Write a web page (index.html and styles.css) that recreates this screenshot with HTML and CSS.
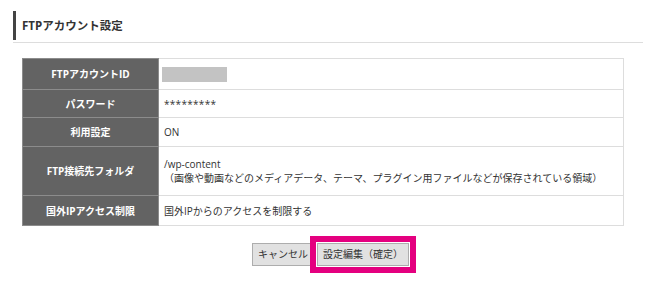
FILE: index.html
```html
<!DOCTYPE html>
<html lang="ja">
<head>
    <meta charset="UTF-8">
    <title>FTPアカウント設定</title>
    <link rel="stylesheet" href="styles.css">
</head>
<body>
    <div class="section-title">
        <h2>FTPアカウント設定</h2>
    </div>

    <table class="settings">
        <tbody>
            <tr class="row-id">
                <th>FTPアカウントID</th>
                <td><span class="masked"></span></td>
            </tr>
            <tr class="row-pass">
                <th>パスワード</th>
                <td class="stars">*********</td>
            </tr>
            <tr class="row-use">
                <th>利用設定</th>
                <td>ON</td>
            </tr>
            <tr class="row-folder">
                <th>FTP接続先フォルダ</th>
                <td>/wp-content<br>（画像や動画などのメディアデータ、テーマ、プラグイン用ファイルなどが保存されている領域）</td>
            </tr>
            <tr class="row-ip">
                <th>国外IPアクセス制限</th>
                <td>国外IPからのアクセスを制限する</td>
            </tr>
        </tbody>
    </table>

    <div class="actions">
        <button class="btn">キャンセル</button>
        <span class="highlight">
            <button class="btn">設定編集（確定）</button>
        </span>
    </div>
</body>
</html>
```

FILE: styles.css
```css
body {
    margin: 0;
    padding: 0;
    background: #fff;
    color: #333;
    font-family: "Open Sans", "Noto Sans CJK JP", sans-serif;
    font-size: 10px;
}

.section-title {
    margin: 11px 7px 0 13px;
    padding-bottom: 2px;
    border-bottom: 1px solid #ddd;
}

.section-title h2 {
    margin: 0;
    padding-left: 6px;
    border-left: 3px solid #444;
    font-size: 11.5px;
    font-weight: bold;
    line-height: 29px;
    color: #333;
}

table.settings {
    width: 602px;
    margin: 15px 0 0 22px;
    border-collapse: collapse;
}

.settings th,
.settings td {
    border: 1px solid #ddd;
    padding: 0 6px;
    line-height: 14px;
}

.settings th {
    width: 123px;
    background-color: #636363;
    border-color: #8c8c8c;
    color: #fff;
    font-weight: bold;
    text-align: center;
}

.settings td {
    color: #333;
    text-align: left;
    padding-left: 5px;
}

.row-id th { height: 30px; }
.row-pass th { height: 27px; }
.row-use th { height: 28px; }
.row-folder th { height: 48px; }
.row-ip th { height: 29px; }

.masked {
    display: block;
    width: 65px;
    height: 15px;
    margin-left: -2px;
    background: #c3c3c3;
}

.stars {
    letter-spacing: 0.3px;
}

.actions {
    display: flex;
    justify-content: center;
    align-items: center;
    margin-top: 10px;
    padding-left: 18px;
}

.btn {
    font-family: "Open Sans", "Noto Sans CJK JP", sans-serif;
    font-size: 10px;
    color: #333;
    background: #e1e1e1;
    border: 1px solid #adadad;
    border-radius: 0;
    height: 23px;
    padding: 0 5px;
    line-height: 21px;
}

.highlight {
    position: relative;
    display: inline-flex;
    margin-left: -4px;
    border: 6px solid #e4007f;
    padding: 1px;
    background: #fff;
}
```
